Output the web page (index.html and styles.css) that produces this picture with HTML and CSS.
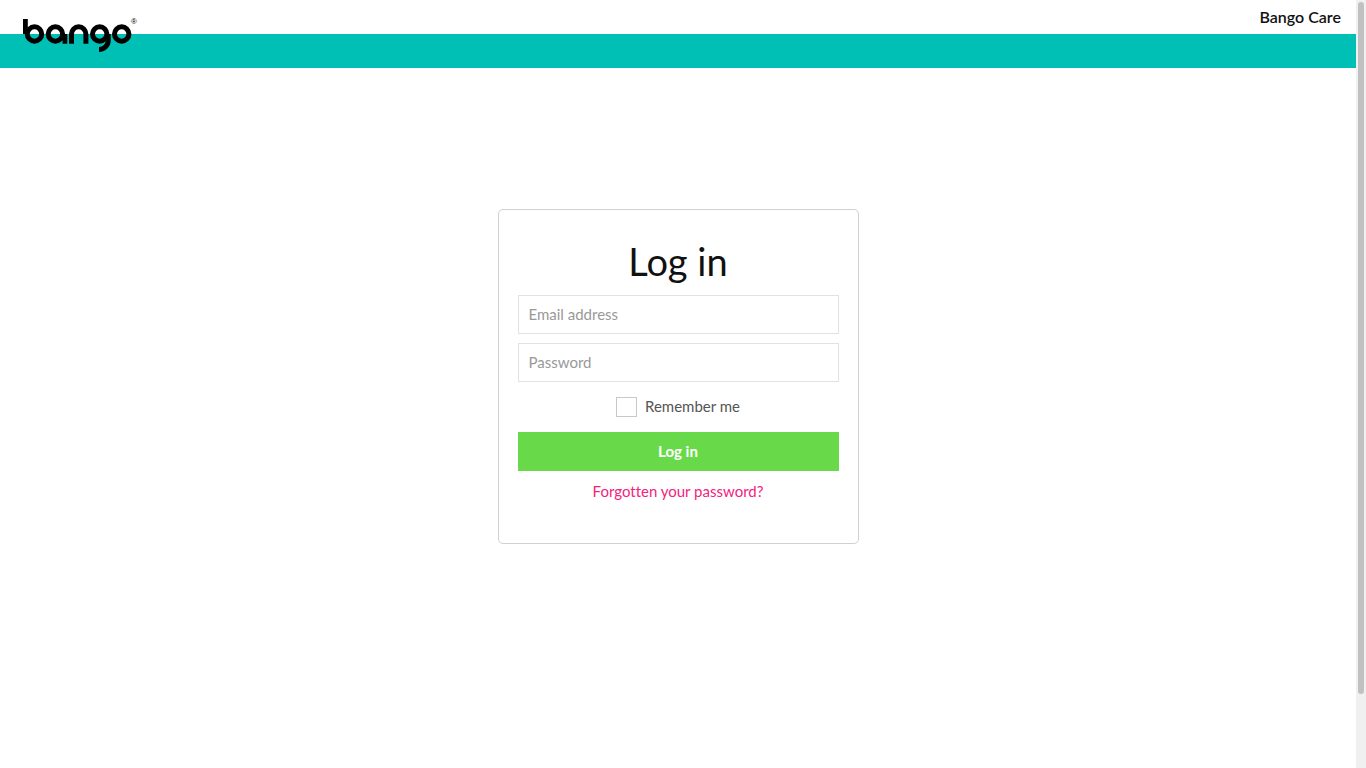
FILE: index.html
```html
<!DOCTYPE html>
<html lang="en">
<head>
    <meta charset="UTF-8">
    <meta name="viewport" content="width=device-width, initial-scale=1.0">
    <title>Bango Care - Log in</title>
    <link rel="stylesheet" href="styles.css">
</head>
<body>
    <div class="page">
        <header class="header">
            <a class="logo" href="/" aria-label="Bango">
                <svg width="120" height="34" viewBox="23 19 120 34" aria-hidden="true">
                    <g fill="none" stroke="#000" stroke-width="5">
                        <circle cx="34.5" cy="34" r="7.2"/>
                        <circle cx="55.4" cy="34" r="7.2"/>
                        <circle cx="99.7" cy="34" r="7.2"/>
                        <circle cx="121.7" cy="34" r="7.2"/>
                    </g>
                    <rect x="23" y="19" width="4.8" height="15"/>
                    <rect x="62.5" y="34" width="4.8" height="9.7"/>
                    <!-- arch -->
                    <svg x="69" y="24" width="20" height="19.7" viewBox="69 24 20 19.7">
                        <rect x="71.5" y="26.8" width="14.4" height="30" rx="7.2" fill="none" stroke="#000" stroke-width="5"/>
                    </svg>
                    <!-- tail -->
                    <svg x="99" y="34" width="12" height="18.5" viewBox="99 34 12 18.5">
                        <rect x="89" y="20" width="19.2" height="29.4" rx="9" fill="none" stroke="#000" stroke-width="5"/>
                    </svg>
                </svg>
                <span class="logo-mark">®</span>
            </a>
            <a class="header-title" href="/care">Bango Care</a>
        </header>
        <main class="main">
            <form class="login-box">
                <h1>Log in</h1>
                <input class="field" type="email" name="email" placeholder="Email address" aria-label="Email address">
                <input class="field" type="password" name="password" placeholder="Password" aria-label="Password">
                <div class="remember">
                    <input type="checkbox" id="remember" name="remember">
                    <label for="remember">Remember me</label>
                </div>
                <button class="submit" type="submit">Log in</button>
                <a class="forgotten" href="/forgotten">Forgotten your password?</a>
            </form>
        </main>
    </div>
    <div class="scrollbar" aria-hidden="true"><div class="scrollbar-thumb"></div></div>
</body>
</html>
```
FILE: styles.css
```css
* { box-sizing: border-box; }
body { display: flex; height: 100vh; margin: 0; font-family: Lato, sans-serif; font-size: 15px; line-height: 20px; font-variant-ligatures: none; color: #111; background: #fff; }

.page { flex: 1; overflow-y: auto; scrollbar-width: none; }
.scrollbar { width: 10px; padding: 2px; background: #f0f0f0; }
.scrollbar-thumb { height: 90.6%; border-radius: 3px; background: #c1c1c1; }

.header { display: flex; justify-content: space-between; align-items: flex-start; height: 68px; padding: 0 15px 0 23px; background: linear-gradient(#fff 50%, #00c0b5 50%); }
.logo { position: relative; padding-top: 19px; color: #000; text-decoration: none; }
.logo svg { display: block; }
.logo-mark { position: absolute; top: 17px; left: 108px; font-family: "Liberation Sans", sans-serif; font-size: 8px; line-height: 10px; }
.header-title { padding-top: 7px; font-size: 16px; font-weight: 600; color: #111; text-decoration: none; }

.main { display: flex; justify-content: center; align-items: flex-start; min-height: 780px; padding: 141px 20px 40px; }
.login-box { display: flex; flex-direction: column; width: 100%; max-width: 361px; padding: 26px 19px 42px; border: 1px solid #d0d0d0; border-radius: 5px; text-align: center; }
.login-box h1 { margin: 0 0 9px; font-size: 38px; font-weight: 400; line-height: 50px; }
.field { height: 39px; margin-bottom: 9px; padding: 0 10px 2px; border: 1px solid #e2e2e2; border-radius: 0; background: #fff; font: inherit; color: #111; }
.field::placeholder { color: #999; }

.remember { display: flex; justify-content: center; align-items: flex-end; gap: 8px; height: 20px; margin: 6px 0 15px; color: #555; }
.remember label { padding-bottom: 1px; }
.remember input { appearance: none; width: 21px; height: 20px; margin: 0; border: 1px solid #ccc9c4; background: #fff; }
.remember input:checked { background: #68da49; }

.submit { height: 39px; margin-bottom: 10px; padding: 0 0 2px; border: none; background: #68da49; font: inherit; font-weight: 700; color: #fff; cursor: pointer; }
.forgotten { align-self: center; color: #f2237d; text-decoration: none; }
.forgotten:hover { text-decoration: underline; }
```
